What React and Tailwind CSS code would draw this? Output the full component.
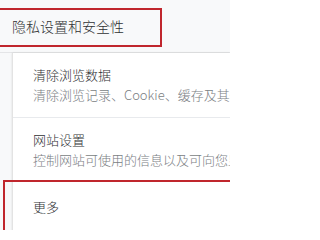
export default function App() {
  const font = { fontFamily: '"Noto Sans CJK SC", "Noto Sans", sans-serif' };
  return (
    <div className="relative w-[230px] h-[230px] overflow-hidden bg-[#f8f9fa]" style={font}>
      <div className="h-[53px] flex items-center pl-[12px] border-b border-[#e4e5e7]">
        <span className="text-[14px] leading-[20px] text-[#2f3133] font-light">隐私设置和安全性</span>
      </div>
      <div className="ml-[12px] bg-white border-l border-[#e3e3e3] shadow-[0_0_2px_rgba(0,0,0,0.12)] overflow-hidden">
        <div className="pl-[20px] pt-[12px] pb-[12px] border-b border-[#e8eaed] whitespace-nowrap">
          <div className="text-[13px] leading-[20px] text-[#2f3133] font-light">清除浏览数据</div>
          <div className="text-[13px] leading-[20px] text-[#7a7e83] font-light">清除浏览记录、Cookie、缓存及其他数据</div>
        </div>
        <div className="pl-[20px] pt-[12px] pb-[11px] border-b border-[#e8eaed] whitespace-nowrap">
          <div className="text-[13px] leading-[20px] text-[#2f3133] font-light">网站设置</div>
          <div className="text-[13px] leading-[20px] text-[#7a7e83] font-light">控制网站可使用的信息以及可向您显示的内容</div>
        </div>
        <div className="pl-[20px] pt-[15px] pb-[20px] whitespace-nowrap">
          <div className="text-[13px] leading-[20px] text-[#2f3133] font-light">更多</div>
        </div>
      </div>
      <div className="absolute left-[-4px] top-[8px] w-[166px] h-[39px] border-2 border-[#c0262d]" />
      <div className="absolute left-[3px] top-[180px] w-[240px] h-[60px] border-2 border-[#c0262d]" />
    </div>
  );
}
